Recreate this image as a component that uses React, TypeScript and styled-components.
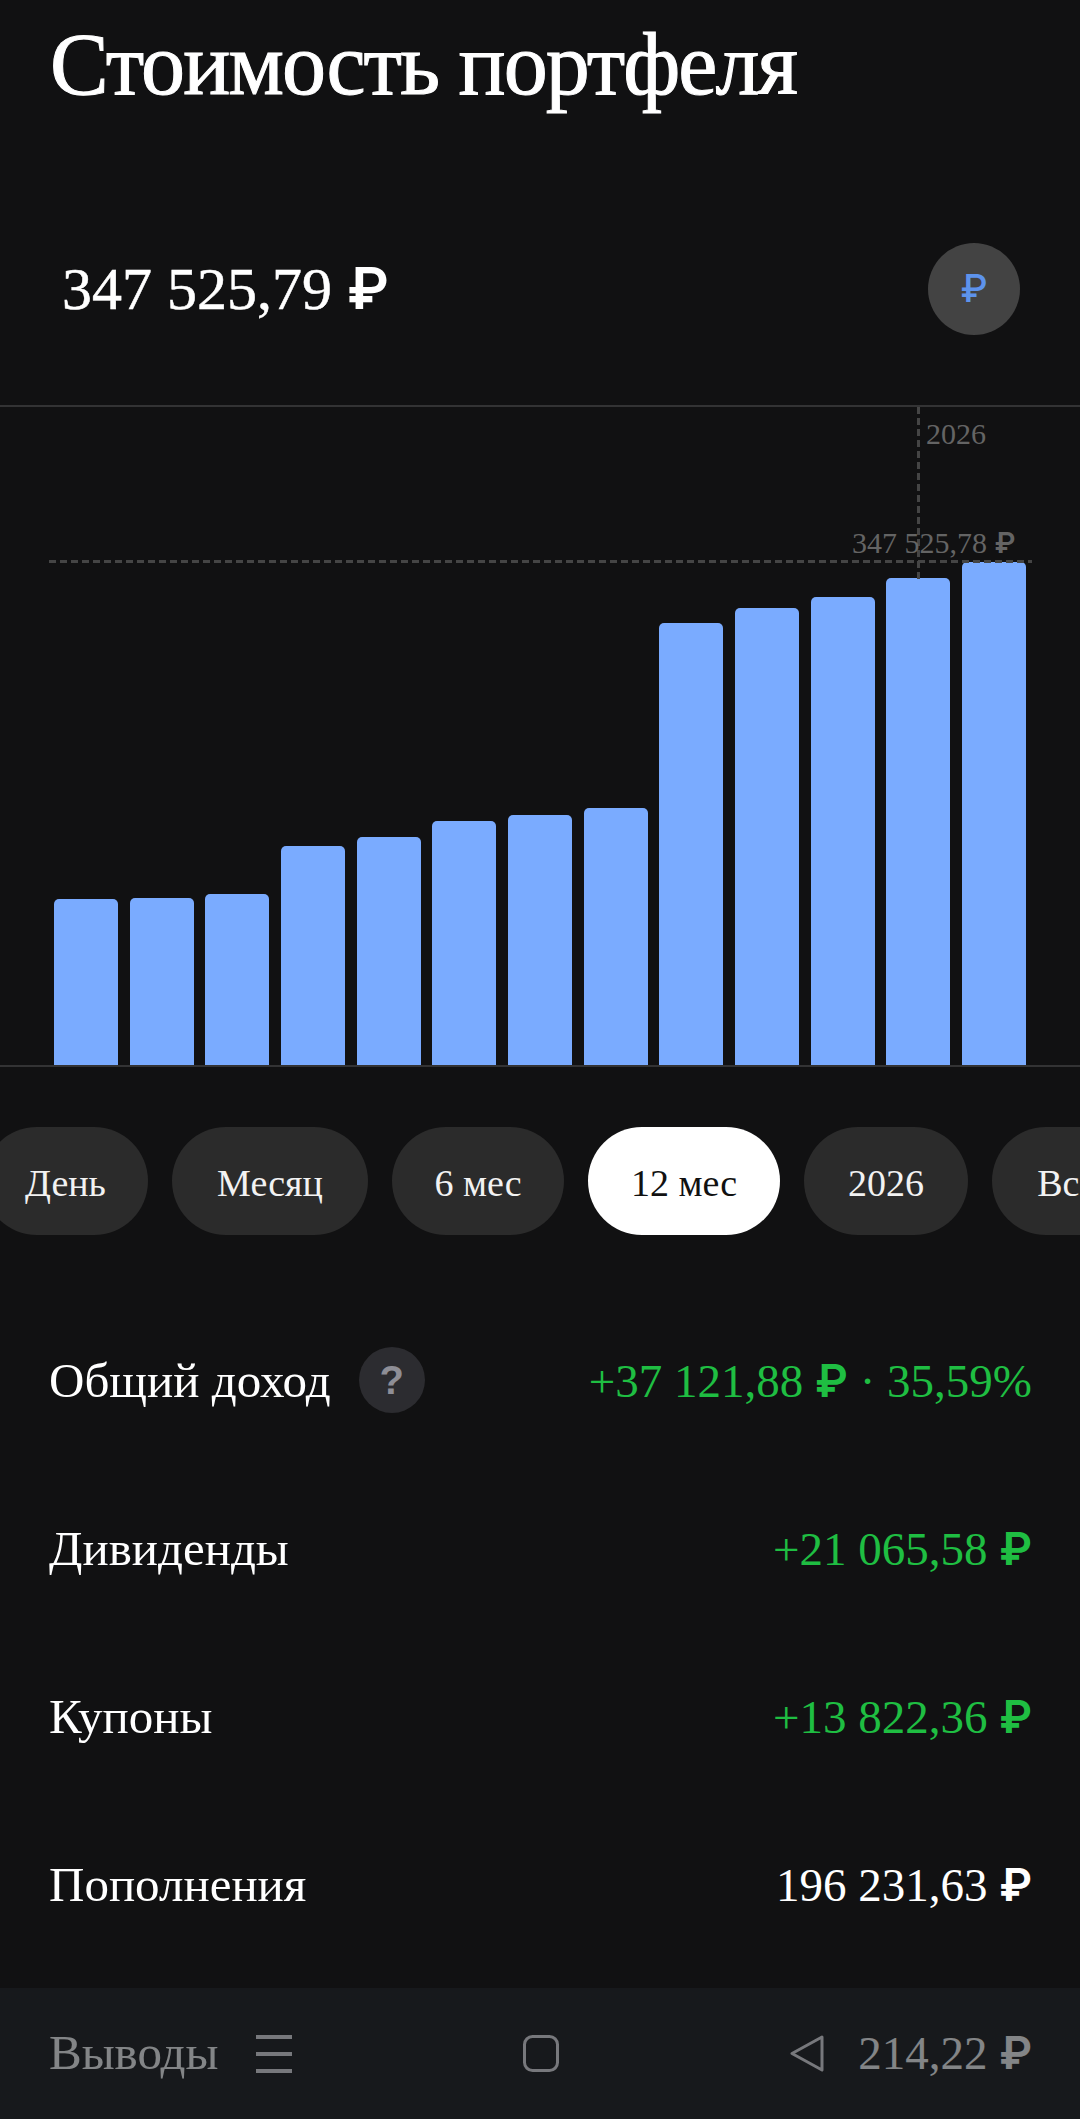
import React from 'react';
import styled, { createGlobalStyle } from 'styled-components';

const GlobalStyle = createGlobalStyle`
  html, body {
    margin: 0;
    padding: 0;
    background: #111112;
  }
`;

const Page = styled.div`
  position: relative;
  width: 1080px;
  height: 2119px;
  overflow: hidden;
  background: #111112;
  color: #fff;
  font-family: 'Liberation Serif', 'Noto Sans', serif;
`;

const Title = styled.h1`
  margin: 0;
  padding: 15px 0 0 50px;
  height: 118px;
  box-sizing: border-box;
  font-size: 88px;
  line-height: 100px;
  font-weight: 400;
  letter-spacing: -1.9px;
  white-space: nowrap;
  -webkit-text-stroke: 1px #fff;
`;

const ValueRow = styled.div`
  display: flex;
  align-items: center;
  justify-content: space-between;
  height: 287px;
  padding: 54px 60px 0 62px;
  box-sizing: border-box;
`;

const Value = styled.div`
  font-size: 60px;
  line-height: 70px;
  -webkit-text-stroke: 0.5px #fff;
`;

const Rub = styled.span`
  font-family: Inter, sans-serif;
  font-weight: 600;
  font-size: 0.96em;
  -webkit-text-stroke: 0;
`;

const CurrencyButton = styled.div`
  width: 92px;
  height: 92px;
  border-radius: 50%;
  background: #434343;
  color: #5d93ec;
  display: flex;
  align-items: center;
  justify-content: center;
  font-family: Inter, sans-serif;
  font-weight: 500;
  font-size: 38px;
  padding-bottom: 2px;
  box-sizing: border-box;
`;

const Chart = styled.div`
  position: relative;
  height: 662px;
  box-sizing: border-box;
  border-top: 2px solid #333334;
  border-bottom: 2px solid #333334;
  padding: 0 54px;
  display: flex;
  align-items: flex-end;
  justify-content: space-between;
`;

const Bar = styled.div`
  width: 64px;
  background: #7aabff;
  border-radius: 5px 5px 0 0;
`;

const CursorV = styled.div`
  position: absolute;
  left: 917px;
  top: 0;
  width: 3px;
  height: 172px;
  background: repeating-linear-gradient(to bottom, #454545 0 7px, transparent 7px 11px);
`;

const CursorH = styled.div`
  position: absolute;
  left: 49px;
  width: 983px;
  top: 153px;
  height: 3px;
  background: repeating-linear-gradient(to right, #454545 0 7px, transparent 7px 11px);
`;

const ChartLabel = styled.div<{ $left: number; $top: number }>`
  position: absolute;
  left: ${p => p.$left}px;
  top: ${p => p.$top}px;
  color: #646464;
  font-size: 30px;
  line-height: 36px;
  white-space: nowrap;
`;

const Chips = styled.div`
  display: flex;
  gap: 24px;
  margin: 60px 0 0 -17px;
  width: 1200px;
`;

const Chip = styled.div<{ $active?: boolean; $width: number }>`
  flex: none;
  width: ${p => p.$width}px;
  height: 108px;
  padding-top: 3px;
  box-sizing: border-box;
  border-radius: 54px;
  display: flex;
  align-items: center;
  justify-content: center;
  font-size: 38px;
  background: ${p => (p.$active ? '#fff' : '#2b2b2b')};
  color: ${p => (p.$active ? '#111' : '#f2f2f2')};
`;

const Rows = styled.div`
  margin-top: 61px;
  padding: 0 48px 0 49px;
`;

const Row = styled.div`
  display: flex;
  align-items: center;
  justify-content: space-between;
  height: 168px;
`;

const Label = styled.div`
  display: flex;
  align-items: center;
  gap: 28px;
  font-size: 49px;
`;

const Amount = styled.div<{ $positive?: boolean }>`
  font-size: 47px;
  color: ${p => (p.$positive ? '#1fbe42' : '#fff')};
`;

const Help = styled.div`
  width: 66px;
  height: 66px;
  border-radius: 50%;
  background: #2c2c30;
  color: #8e8e96;
  display: flex;
  align-items: center;
  justify-content: center;
  font-family: 'Liberation Sans', sans-serif;
  font-weight: 700;
  font-size: 40px;
`;

const NavBar = styled.div`
  position: absolute;
  left: 0;
  right: 0;
  bottom: 0;
  height: 131px;
  background: rgba(29, 32, 37, 0.55);
  display: flex;
  align-items: center;
  justify-content: space-between;
  padding: 0 256px 0 256px;
  box-sizing: border-box;
`;

const barTops = [899, 898, 894, 846, 837, 821, 815, 808, 623, 608, 597, 578, 562];
const chips = [
  { text: 'День', width: 165 },
  { text: 'Месяц', width: 196 },
  { text: '6 мес', width: 172 },
  { text: '12 мес', width: 192 },
  { text: '2026', width: 164 },
  { text: 'Все', width: 150 },
];
const rows = [
  { label: 'Дивиденды', amount: '+21 065,58', positive: true },
  { label: 'Купоны', amount: '+13 822,36', positive: true },
  { label: 'Пополнения', amount: '196 231,63' },
  { label: 'Выводы', amount: '214,22' },
];

export default function App() {
  return (
    <Page>
      <GlobalStyle />
      <Title>Стоимость портфеля</Title>
      <ValueRow>
        <Value>
          347 525,79 <Rub>₽</Rub>
        </Value>
        <CurrencyButton>₽</CurrencyButton>
      </ValueRow>
      <Chart>
        {barTops.map((top, i) => (
          <Bar key={i} style={{ height: 1065 - top }} />
        ))}
        <CursorV />
        <CursorH />
        <ChartLabel $left={926} $top={9}>2026</ChartLabel>
        <ChartLabel $left={852} $top={118}>
          347 525,78 <Rub>₽</Rub>
        </ChartLabel>
      </Chart>
      <Chips>
        {chips.map(c => (
          <Chip key={c.text} $width={c.width} $active={c.text === '12 мес'}>{c.text}</Chip>
        ))}
      </Chips>
      <Rows>
        <Row>
          <Label>
            Общий доход
            <Help>?</Help>
          </Label>
          <Amount $positive>
            +37 121,88 <Rub>₽</Rub> · 35,59%
          </Amount>
        </Row>
        {rows.map(r => (
          <Row key={r.label}>
            <Label>{r.label}</Label>
            <Amount $positive={r.positive}>
              {r.amount} <Rub>₽</Rub>
            </Amount>
          </Row>
        ))}
      </Rows>
      <NavBar>
        <svg width="36" height="38" viewBox="0 0 36 38" fill="#77787c">
          <rect y="0" width="36" height="4" />
          <rect y="17" width="36" height="4" />
          <rect y="34" width="36" height="4" />
        </svg>
        <svg width="36" height="37" viewBox="0 0 36 37" fill="none" stroke="#77787c" strokeWidth="3">
          <rect x="1.5" y="1.5" width="33" height="34" rx="8" />
        </svg>
        <svg width="34" height="37" viewBox="0 0 34 37" fill="none" stroke="#77787c" strokeWidth="3" strokeLinejoin="round">
          <path d="M32 2 L2 18.5 L32 35 Z" />
        </svg>
      </NavBar>
    </Page>
  );
}
